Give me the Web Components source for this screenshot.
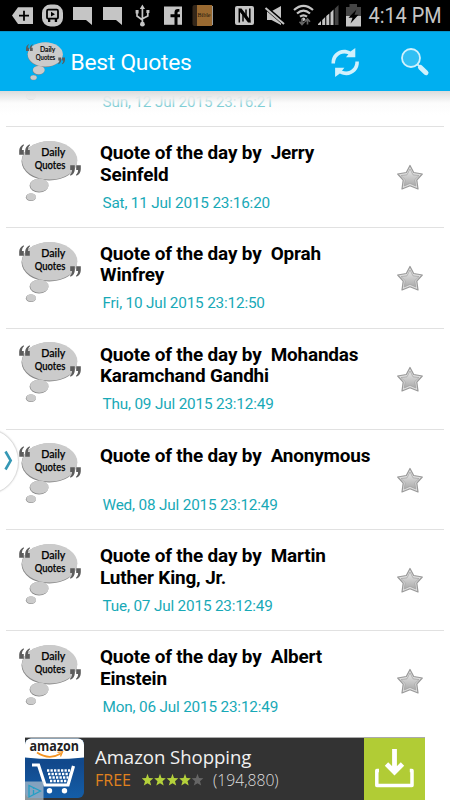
<!DOCTYPE html>
<html lang="en"><head><meta charset="utf-8"><title>Best Quotes</title>
<style>html,body{margin:0;background:#fff}body{width:450px;height:800px;overflow:hidden;font-family:Roboto,sans-serif}</style></head>
<body>
<quotes-app></quotes-app>
<script>
function define(name, html) {
  customElements.define(name, class extends HTMLElement {
    constructor() {
      super();
      const t = document.createElement('template');
      t.innerHTML = html;
      this.attachShadow({mode:'open'}).append(t.content.cloneNode(true));
    }
  });
}

define('bubble-logo', `
<style>:host{display:block;width:64px;height:68px}svg{display:block;width:100%;height:100%}text{font-family:Lato,sans-serif;font-weight:500;fill:#000;stroke:#000;stroke-width:.25}:host-context(quote-row[scrolled]) text{display:none}</style>
<svg viewBox="0 0 64 68">
<g fill="#858585"><ellipse cx="31.2" cy="25.1" rx="27.7" ry="19.5"/><ellipse cx="21" cy="49.7" rx="9.4" ry="6.9"/><ellipse cx="12.9" cy="61.3" rx="5" ry="3.8"/></g>
<g fill="#cbcbcb"><ellipse cx="31.7" cy="24.3" rx="27.7" ry="19.3"/><ellipse cx="21.4" cy="49.1" rx="9.3" ry="6.6"/><ellipse cx="13.2" cy="60.9" rx="4.9" ry="3.6"/></g>
<g fill="#5c5c5c"><path d="M5.6 8.2C2.8 9.6 1.2 11.8 1.2 14.8V18.8H5.8V14H3.9C4 12 4.6 10.4 6 9.2ZM11.6 8.2C8.8 9.6 7.2 11.8 7.2 14.8V18.8H11.8V14H9.9C10 12 10.6 10.4 12 9.2Z"/><path d="M5.6 8.2C2.8 9.6 1.2 11.8 1.2 14.8V18.8H5.8V14H3.9C4 12 4.6 10.4 6 9.2ZM11.6 8.2C8.8 9.6 7.2 11.8 7.2 14.8V18.8H11.8V14H9.9C10 12 10.6 10.4 12 9.2Z" transform="rotate(180 32 24)"/></g>
<text x="23.3" y="20.4" font-size="11.6" textLength="24" lengthAdjust="spacingAndGlyphs">Daily</text>
<text x="16.7" y="33.4" font-size="11.2" textLength="30.6" lengthAdjust="spacingAndGlyphs">Quotes</text>
</svg>`);

define('status-bar', `
<style>:host{display:block;height:31px;background:#000}svg{display:block}text{font-family:Roboto,sans-serif}</style>
<svg width="450" height="31" viewBox="0 0 450 31" fill="#c5c5c5">
<path d="M12 15.5 18 7.3H33V24H18Z"/><path d="M19 15.7H29M24 10.7V20.7" stroke="#000" stroke-width="1.8"/>
<rect x="42" y="4.5" width="21" height="22" rx="8.5"/><rect x="47" y="9.7" width="11" height="9" rx="1.2" fill="none" stroke="#000" stroke-width="1.8"/><path d="M51 11.8 55 14.2 51 16.6ZM48 19h2.3v3H48ZM54.8 19h2.3v3h-2.3Z" fill="#000"/>
<path d="M73 7H92V25L86 20H73ZM103 7H122V25L116 20H103Z"/>
<g stroke="#c5c5c5" fill="none" stroke-width="1.7"><path d="M142.4 24V8M137 11.5V16L142.4 20M147.8 11V16L142.4 18.8"/></g><path d="M142.4 4.5 145 9H139.8ZM135.6 10h3v3.5h-3ZM146.4 10h3v3h-3Z"/><circle cx="142.4" cy="24.2" r="2.4"/>
<path d="M164 6.5H182V24.8H164Z"/><path d="M174.5 25V17.3H170.5V14.3H174.5V12.3C174.5 9.6 176 8.6 179.4 9V11.8C177.7 11.6 177.5 12 177.5 14.3H180V17.3H177.5V25Z" fill="#000"/>
<rect x="192.5" y="5" width="20.5" height="21" rx="2" fill="#352719"/><rect x="197" y="5" width="15" height="21" fill="#9a6a31"/><path d="M212.5 6v19" stroke="#aaa" stroke-width=".9"/><text x="197.5" y="17" font-size="6.6" textLength="13" lengthAdjust="spacingAndGlyphs" style="font-family:Liberation Serif,serif;fill:#24180c">Bible</text>
<rect x="235" y="6" width="19" height="19" rx="2"/><path d="M239.3 22.5V10L243 14V21.5M249.8 8.5V21L246 17V9.5" fill="none" stroke="#000" stroke-width="1.5"/><path d="M239 8.5H241.5L250.3 20V22.5H248L239 10.5Z" fill="#000"/>
<path d="M267 11.2H271.5L281 6V25L271.5 20H267Z"/><path d="M264.5 6.5 285 24.2" stroke="#000" stroke-width="4"/><path d="M265.5 8 284 24" stroke="#c5c5c5" stroke-width="2"/>
<g fill="none" stroke="#c5c5c5" stroke-width="2.2"><path d="M294 10Q303.5 1.7 313 10M297 13.5Q303.5 7.8 310 13.5M300 16.7Q303.5 14 307 16.7"/></g><circle cx="303.5" cy="19.3" r="1.8"/>
<path d="M302 18.5V24M299.5 21.8 302 24.5 304.5 21.8M307.5 24.5V19.5M305 21.7 307.5 19 310 21.7" fill="none" stroke="#666" stroke-width="1.6"/>
<path d="M318 25V24L321 21V25ZM322.2 25V20L325.2 17V25ZM326.3 25V16L329.3 13.5V25ZM330.5 25V12.5L333.5 9.5V25Z"/><path d="M334.7 25V8.7L338.5 5V25Z" fill="#444"/>
<path d="M346 7H349.5V4H357V7H361V16H346Z" fill="#454545"/><path d="M346 16H361V26.5H346Z"/><path d="M356.5 9.5 348.5 17.7H352.5L350.5 23.5 358.5 14.8H354.5Z" fill="#000"/>
<text x="368.5" y="23" font-size="21.5" textLength="73" lengthAdjust="spacingAndGlyphs">4:14 PM</text>
</svg>`);

define('app-header', `
<style>:host{display:flex;align-items:center;height:60px;background:#00aff0;position:relative;z-index:2;box-sizing:border-box;padding-left:24.5px;border-top:1px solid #0896cc;box-shadow:0 1px 1px #b9c2c5}
:host::after{content:"";position:absolute;left:0;right:0;top:59px;height:24px;background:linear-gradient(#dcdcdc,#eeeeeef2 30%,#fafafaa0 50%,#fff0)}
bubble-logo{width:41px;height:43px;margin-top:-3px}h1{margin:2px auto 0 5px;font:400 22.8px/30px Roboto,sans-serif;color:#fff;letter-spacing:-.25px}
svg{display:block}.r{margin:2px 40px 0 0}.s{margin:0 20px 0 0}</style>
<bubble-logo></bubble-logo><h1>Best Quotes</h1>
<svg class="r" width="30" height="32" viewBox="330 46 30 32"><g fill="#d1f1fc"><path d="M331.5 62.5C331 52.5 341 45.5 350.5 50.5L355.3 47V56.2H346L348.4 53.3C341 50.5 335 55.5 335 62.5Z"/><path d="M331.5 62.5C331 52.5 341 45.5 350.5 50.5L355.3 47V56.2H346L348.4 53.3C341 50.5 335 55.5 335 62.5Z" transform="rotate(180 345.2 61.5)"/></g></svg>
<svg class="s" width="30" height="30" viewBox="400 46 30 30"><circle cx="411" cy="57" r="9" fill="#31bff3" stroke="#d1f1fc" stroke-width="1.8"/><path d="M417.5 63.5 420.5 66" stroke="#d1f1fc" stroke-width="2"/><path d="M420.5 66.5 426 71.7" stroke="#d1f1fc" stroke-width="5" stroke-linecap="round"/></svg>`);

define('favorite-star', `
<style>:host{display:block;width:28px;height:27px}svg{display:block}</style>
<svg width="28" height="27" viewBox="0 0 28 27"><defs><linearGradient id="g" x2="0" y2="1"><stop stop-color="#e8e8e8"/><stop offset="1" stop-color="#aaa"/></linearGradient></defs>
<path d="M14 1.5 17.7 8.5 26.3 10 20.8 16.2 22 25 14 21.8 6 25 7.2 16.2 1.7 10 10.3 8.5Z" fill="#ddd" stroke="#999" stroke-width="1.2" stroke-linejoin="round"/><path d="M14 5 17 10.8 23 11.6 18.8 15.7 19.8 22 14 19.4 8.2 22 9.2 15.7 5 11.6 11 10.8Z" fill="url(#g)" stroke="#a2a2a2" stroke-width=".7"/></svg>`);

define('quote-row', `
<style>:host{display:grid;grid-template-columns:94px 1fr 54px;height:100.85px;box-sizing:border-box;margin:0 6px;border-bottom:1.5px solid #e1e1e1}
bubble-logo{margin:8.7px 0 0 12px}.body{display:flex;flex-direction:column}.title{height:43px;margin-top:15px;font:700 18.9px/21.5px Roboto,sans-serif;letter-spacing:-.15px;white-space:pre;color:#000}
.date{margin:7.6px 0 0 2.5px;font:400 15.3px/20px Roboto,sans-serif;letter-spacing:-.17px;color:#18a9b7;white-space:nowrap}favorite-star{margin:37px 0 0 5.5px}</style>
<bubble-logo></bubble-logo><div class="body"><div class="title"><slot></slot></div><div class="date"><slot name="date"></slot></div></div><favorite-star></favorite-star>`);

define('drawer-handle', `
<style>:host{position:absolute;left:-48px;top:428px;width:67px;height:67px;box-sizing:border-box;border-radius:50%;background:#fff;border:1px solid #ddd;box-shadow:0 0 2px #ddd}svg{position:absolute;left:51px;top:21px}</style>
<svg width="10" height="22" viewBox="0 0 10 22"><path d="M1.5 1.5 6.7 10.5 1.5 19.5" fill="none" stroke="#3598b5" stroke-width="2.6"/></svg>`);

define('app-ad', `
<style>:host{display:flex;position:absolute;left:25px;top:737px;width:400px;height:63px;background:#333;border-top:1px solid #aaa;box-sizing:border-box;font-family:"Open Sans",sans-serif}
.icon{width:59px;height:62px}.copy{flex:1;padding:7px 0 0 11px;color:#f1f1f1}.name{font-size:18.6px;line-height:24px;letter-spacing:-.05px;white-space:nowrap}.meta{display:flex;align-items:center;height:22px;font-size:15.7px}.free{color:#e0821e;width:47px;font-size:16px}.count{margin-left:9px;color:#ddd;font-weight:300}.get{width:61px;height:62px;background:#b1cc35}svg{display:block}</style>
<svg class="icon" viewBox="25 738 59 62"><defs><linearGradient id="b" x2="0" y2="1"><stop stop-color="#075aa0"/><stop offset=".4" stop-color="#12488b"/><stop offset="1" stop-color="#145fa9"/></linearGradient><clipPath id="c"><rect x="25" y="738.5" width="59" height="59.5" rx="6"/></clipPath></defs>
<g clip-path="url(#c)"><rect x="25" y="738" width="59" height="62" fill="url(#b)"/><path d="M25 738H84V757.5Q54 760.5 25 757.5Z" fill="#fff"/></g>
<text x="29.5" y="751" font-size="13.5" font-weight="700" font-family="Open Sans,sans-serif" textLength="49.5" lengthAdjust="spacingAndGlyphs" fill="#222">amazon</text>
<path d="M37 752.5Q49 760.5 61 753.5" fill="none" stroke="#f49320" stroke-width="1.7"/><path d="M57.5 752.3 62.5 751.7 60.5 756.5" fill="none" stroke="#f49320" stroke-width="1.3"/>
<path d="M32 765H38.5L45 785H68L73.5 766" fill="none" stroke="#fff" stroke-width="3.2"/>
<path d="M47 770.5H70M48 774H69.5M49 777.5H68.5M50 781H67.5" stroke="#fff" stroke-width="2.3" stroke-dasharray="2.3 1.2"/><circle cx="49.5" cy="790.7" r="2.7" fill="#fff"/><circle cx="64.5" cy="790.7" r="2.7" fill="#fff"/>
<rect x="25" y="781.5" width="18.5" height="18.5" fill="#bac7cfad"/><path d="M29 785.5V797L40.5 791Z" fill="none" stroke="#239fc5" stroke-width="1.3"/><path d="M33.5 790V794.5M33.5 787.5V788.8" stroke="#239fc5" stroke-width="1.3"/></svg>
<div class="copy"><div class="name">Amazon Shopping</div><div class="meta"><span class="free">FREE</span><svg width="62" height="14" viewBox="142 772 62 14"><g fill="#b4d13b" id="stars"></g></svg><span class="count">(194,880)</span></div></div>
<svg class="get" viewBox="364 738 61 62"><path d="M394.5 749V771M386.5 764 394.5 772 402.5 764" fill="none" stroke="#fff" stroke-width="4.8"/><path d="M379 770.5H376.8V785.5H412V770.5H409.8" fill="none" stroke="#fff" stroke-width="3.5" stroke-linejoin="round"/></svg>`);

define('quotes-app', `
<style>:host{display:block;position:relative;width:450px;height:800px;overflow:hidden;background:#fff}.list{height:709px;overflow:hidden}.list quote-row:first-child{margin-top:-64.8px}.list quote-row:last-child{border:0}</style>
<status-bar></status-bar><app-header></app-header><div class="list"></div><drawer-handle></drawer-handle><app-ad></app-ad>`);

const app = document.querySelector('quotes-app').shadowRoot;
const list = app.querySelector('.list');
for (const [title, date] of [
  ['', 'Sun, 12 Jul 2015 23:16:21'],
  ['Jerry\nSeinfeld', 'Sat, 11 Jul 2015 23:16:20'],
  ['Oprah\nWinfrey', 'Fri, 10 Jul 2015 23:12:50'],
  ['Mohandas\nKaramchand Gandhi', 'Thu, 09 Jul 2015 23:12:49'],
  ['Anonymous', 'Wed, 08 Jul 2015 23:12:49'],
  ['Martin\nLuther King, Jr.', 'Tue, 07 Jul 2015 23:12:49'],
  ['Albert\nEinstein', 'Mon, 06 Jul 2015 23:12:49']
]) {
  const row = document.createElement('quote-row');
  if (!title) row.setAttribute('scrolled', '');
  row.append(title ? 'Quote of the day by  ' + title : '');
  const d = document.createElement('span');
  d.slot = 'date';
  d.textContent = date;
  row.append(d);
  list.append(row);
}
const stars = app.querySelector('app-ad').shadowRoot.querySelector('#stars');
for (let i = 0; i < 5; i++) {
  const p = document.createElementNS('http://www.w3.org/2000/svg', 'path');
  p.setAttribute('d', 'M147.5 772.8 149 777 153.3 777.3 150 780.2 151.2 784.5 147.5 782.2 143.8 784.5 145 780.2 141.7 777.3 146 777Z');
  p.setAttribute('transform', 'translate(' + i * 12.5 + ' 0)');
  if (i === 4) p.setAttribute('fill', '#666');
  stars.append(p);
}
</script>
</body></html>
